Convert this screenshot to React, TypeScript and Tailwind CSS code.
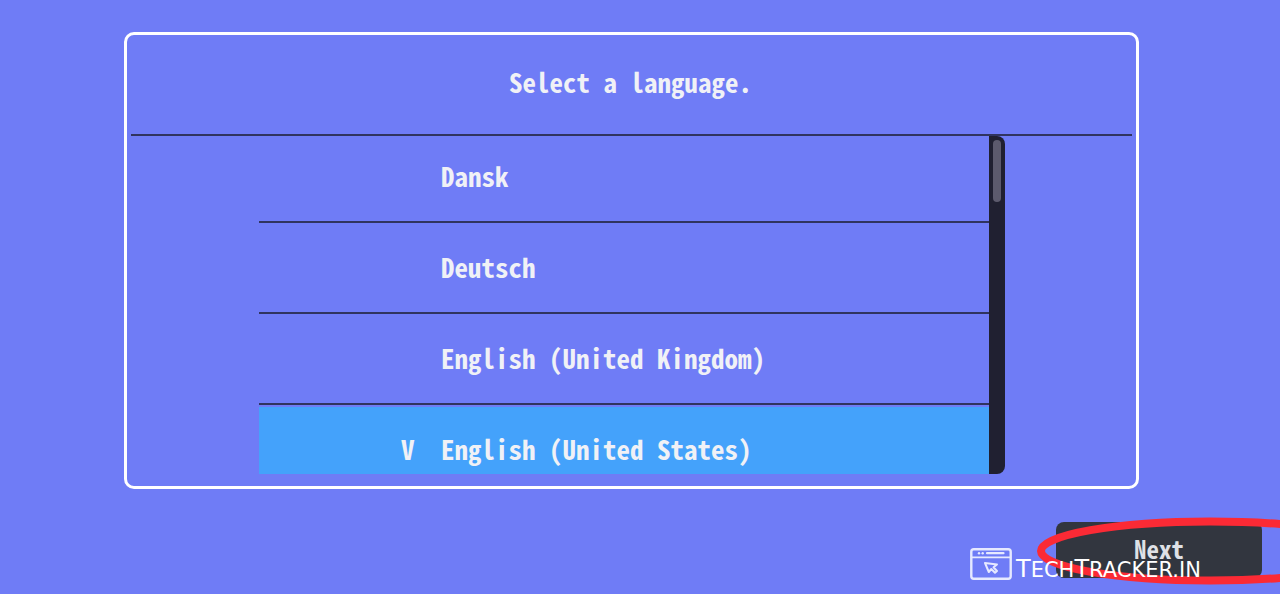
import { useState } from "react";

const languages = [
  "Dansk",
  "Deutsch",
  "English (United Kingdom)",
  "English (United States)",
];

function BrowserIcon() {
  return (
    <svg width="42" height="32" viewBox="0 0 42 32" fill="none" aria-hidden="true">
      <rect x="1.3" y="1.2" width="39.4" height="29.6" rx="2.5" stroke="#e6e9ff" strokeWidth="2.4" />
      <path d="M1 9.3H41" stroke="#e6e9ff" strokeWidth="1.7" />
      <path d="M17 5.2H33.5" stroke="#e6e9ff" strokeWidth="2.2" strokeLinecap="round" />
      <circle cx="9" cy="5.2" r="1.2" fill="#e6e9ff" />
      <circle cx="12.7" cy="5.2" r="1.2" fill="#e6e9ff" />
      <path
        d="M15 15L27 16.5L23.5 19.2L27 23L25 24.7L21.3 21L18.8 24Z"
        stroke="#e6e9ff"
        strokeWidth="2"
        strokeLinejoin="round"
      />
    </svg>
  );
}

export default function App() {
  const [selected, setSelected] = useState("English (United States)");

  return (
    <div className="relative min-h-screen overflow-hidden bg-[#6f7cf6] pt-8 font-['Noto_Sans_Mono_CJK_JP','Noto_Sans_Mono_CJK_SC','DejaVu_Sans_Mono',monospace] text-[27px] leading-8 font-bold text-[#f0f1f6]">
      <main className="mr-[141px] ml-[124px] rounded-[10px] border-3 border-white px-1 pb-3">
        <h1 className="border-b-2 border-[#30345f] pt-[31px] pr-0.5 pb-9 text-center">
          Select a language.
        </h1>
        <div className="mr-[127px] ml-32 flex h-[338px]">
          <ul role="listbox" aria-label="Language" className="flex min-w-0 flex-1 flex-col overflow-hidden">
            {languages.map((name, i) => (
              <li
                key={name}
                role="option"
                aria-selected={name === selected}
                className={
                  "shrink-0 border-b-2 border-[#30345f] pt-0.5 " +
                  (i === 0 ? "h-[87px]" : "h-[91px]")
                }
              >
                <button
                  type="button"
                  onClick={() => setSelected(name)}
                  className={
                    "flex h-full w-full items-center pl-[142px] text-left " +
                    (name === selected ? "bg-[#44a2fb] " : "") +
                    (i === 0 ? "pb-2" : "pb-1")
                  }
                >
                  <span className="w-10">{name === selected ? "V" : ""}</span>
                  <span className="whitespace-nowrap">{name}</span>
                </button>
              </li>
            ))}
          </ul>
          <div className="w-4 rounded-r-lg bg-[#202031] p-1">
            <div className="h-[62px] rounded-full bg-[#5c5a6d]" />
          </div>
        </div>
      </main>
      <footer className="flex justify-end pt-[33px] pr-[18px]">
        <button type="button" className="h-14 w-[206px] rounded-lg bg-[#32363f] pb-1 text-[25px] leading-6 text-[#dfe1e6]">
          Next
        </button>
      </footer>
      <svg className="pointer-events-none absolute right-0 bottom-0" width="250" height="84" viewBox="0 0 250 84" fill="none" aria-hidden="true">
        <ellipse cx="180" cy="41" rx="169" ry="29.5" stroke="#fb2a35" strokeWidth="8" />
      </svg>
      <div className="pointer-events-none absolute right-14 bottom-[14px] flex w-[254px] items-end gap-1 text-white">
        <BrowserIcon />
        <span className="font-['DejaVu_Sans',sans-serif] text-[21px] leading-5 font-normal whitespace-nowrap">
          <span className="text-2xl leading-5">T</span>ECH<span className="text-2xl leading-5">T</span>RACKER.IN
        </span>
      </div>
    </div>
  );
}
